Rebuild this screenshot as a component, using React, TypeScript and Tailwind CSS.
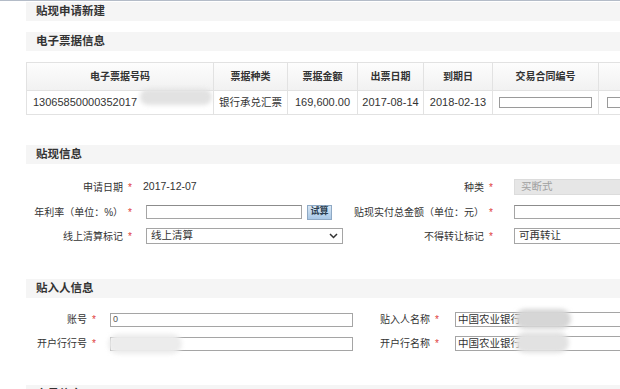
import React from "react";

const font = "font-['Liberation_Sans','Noto_Sans_CJK_SC',sans-serif]";

function SectionTitle({ title }: { title: string }) {
  return (
    <div className="ml-[26px] h-[19px] bg-[#f5f5f5] pl-[10px] flex items-center text-[11.5px] font-bold text-[#333]">
      {title}
    </div>
  );
}

function Star() {
  return <span className="ml-[5px] text-[#e03b3b] text-[10px]">*</span>;
}

function Blur({ className }: { className: string }) {
  return <div className={"absolute rounded-full blur-[2px] " + className} />;
}

const columns = [
  { title: "电子票据号码", w: "w-[187px]" },
  { title: "票据种类", w: "w-[74px]" },
  { title: "票据金额", w: "w-[70px]" },
  { title: "出票日期", w: "w-[66px]" },
  { title: "到期日", w: "w-[69px]" },
  { title: "交易合同编号", w: "w-[106px]" },
  { title: "", w: "w-[100px]" },
];

export default function App() {
  return (
    <div className={"relative w-[620px] h-[389px] overflow-hidden bg-white text-[#333] " + font}>
      <div className="h-px bg-[#b4bcc8]" />
      <div className="mt-px">
        <SectionTitle title="贴现申请新建" />
      </div>

      <div className="mt-[11px]">
        <SectionTitle title="电子票据信息" />
      </div>

      {/* Bill table */}
      <div className="relative mt-[11px] ml-[26px]">
        <table className="border-collapse table-fixed w-[672px]">
          <thead>
            <tr className="h-[28px] bg-linear-to-b from-[#fdfdfd] to-[#f1f1f1]">
              {columns.map((c, i) => (
                <th
                  key={i}
                  className={"border border-[#e2e2e2] text-[10px] font-bold text-center " + c.w}
                >
                  {c.title}
                </th>
              ))}
            </tr>
          </thead>
          <tbody>
            <tr className="h-[24px] text-[11px]">
              <td className="border border-[#e2e2e2] pl-[6px] text-left whitespace-nowrap">13065850000352017</td>
              <td className="border border-[#e2e2e2] text-center text-[10.5px]">银行承兑汇票</td>
              <td className="border border-[#e2e2e2] text-center">169,600.00</td>
              <td className="border border-[#e2e2e2] text-center">2017-08-14</td>
              <td className="border border-[#e2e2e2] text-center">2018-02-13</td>
              <td className="border border-[#e2e2e2] px-[6px]">
                <div className="h-[11px] border border-[#9a9a9a] bg-white" />
              </td>
              <td className="border border-[#e2e2e2] px-[8px]">
                <div className="h-[11px] border border-[#9a9a9a] bg-white" />
              </td>
            </tr>
          </tbody>
        </table>
        <Blur className="left-[114px] top-[27px] w-[72px] h-[16px] bg-[#e2e2e2]" />
      </div>

      <div className="mt-[30px]">
        <SectionTitle title="贴现信息" />
      </div>

      {/* Discount info form */}
      <div className="mt-[15px] ml-[26px] flex flex-col text-[10px] whitespace-nowrap">
        <div className="flex items-center h-[16px]">
          <div className="shrink-0 w-[106px] text-right">申请日期<Star /></div>
          <div className="shrink-0 w-[218px] pl-[11px] text-[10.5px]">2017-12-07</div>
          <div className="shrink-0 w-[143px] text-right">种类<Star /></div>
          <div className="shrink-0 ml-[21px] w-[130px] h-[16px] bg-[#e6e6e6] border border-[#dcdcdc] pl-[6px] flex items-center text-[10.5px] text-[#a0a0a0]">
            买断式
          </div>
        </div>
        <div className="flex items-center h-[16px] mt-[9px]">
          <div className="shrink-0 w-[106px] text-right">年利率（单位：%）<Star /></div>
          <div className="shrink-0 w-[218px] pl-[14px] flex items-center">
            <div className="w-[156px] h-[14px] border border-[#a5a5a5] border-t-[#8c8c8c] bg-white" />
            <div className="ml-[5px] w-[25px] h-[15px] border border-[#8fa9c4] bg-linear-to-b from-[#d9e8f5] to-[#a8c7e6] text-[9px] font-bold text-[#2c3e50] flex items-center justify-center">
              试算
            </div>
          </div>
          <div className="shrink-0 w-[143px] text-right">贴现实付总金额（单位：元）<Star /></div>
          <div className="shrink-0 ml-[21px] w-[130px] h-[14px] border border-[#a5a5a5] border-t-[#8c8c8c] bg-white" />
        </div>
        <div className="flex items-center h-[16px] mt-[8px]">
          <div className="shrink-0 w-[106px] text-right">线上清算标记<Star /></div>
          <div className="shrink-0 w-[218px] pl-[14px]">
            <div className="w-[197px] h-[16px] border border-[#a5a5a5] bg-white pl-[4px] pr-[4px] flex items-center justify-between text-[10.5px]">
              <span>线上清算</span>
              <svg width="9" height="6" viewBox="0 0 9 6" fill="none">
                <path d="M1 1l3.5 3.5L8 1" stroke="#333" strokeWidth="1.5" />
              </svg>
            </div>
          </div>
          <div className="shrink-0 w-[143px] text-right">不得转让标记<Star /></div>
          <div className="shrink-0 ml-[21px] w-[130px] h-[16px] border border-[#a5a5a5] bg-white pl-[4px] flex items-center text-[10.5px]">
            可再转让
          </div>
        </div>
      </div>

      <div className="mt-[35px]">
        <SectionTitle title="贴入人信息" />
      </div>

      {/* Buyer info form */}
      <div className="relative mt-[14px] ml-[26px] flex flex-col text-[10px] whitespace-nowrap">
        <div className="flex items-center h-[15px]">
          <div className="shrink-0 w-[70px] text-right">账号<Star /></div>
          <div className="shrink-0 ml-[14px] w-[243px] h-[14px] border border-[#a5a5a5] bg-white pl-[2px] flex items-center text-[9px] text-[#555]">
            0
          </div>
          <div className="shrink-0 w-[86px] text-right">贴入人名称<Star /></div>
          <div className="shrink-0 ml-[16px] w-[180px] h-[15px] border border-[#a5a5a5] bg-white pl-[2px] flex items-center text-[10.5px]">
            中国农业银行
          </div>
        </div>
        <div className="flex items-center h-[15px] mt-[9px]">
          <div className="shrink-0 w-[70px] text-right">开户行行号<Star /></div>
          <div className="shrink-0 ml-[14px] w-[243px] h-[14px] border border-[#a5a5a5] bg-white" />
          <div className="shrink-0 w-[86px] text-right">开户行名称<Star /></div>
          <div className="shrink-0 ml-[16px] w-[180px] h-[15px] border border-[#a5a5a5] bg-white pl-[2px] flex items-center text-[10.5px]">
            中国农业银行
          </div>
        </div>
        <Blur className="left-[82px] top-[22px] w-[74px] h-[20px] bg-[#ececec]" />
        <Blur className="left-[489px] top-[-3px] w-[56px] h-[20px] bg-[#d6d6d6]" />
        <Blur className="left-[489px] top-[20px] w-[54px] h-[21px] bg-[#e2e2e2]" />
      </div>

      <div className="mt-[34px]">
        <SectionTitle title="交易信息" />
      </div>
    </div>
  );
}
